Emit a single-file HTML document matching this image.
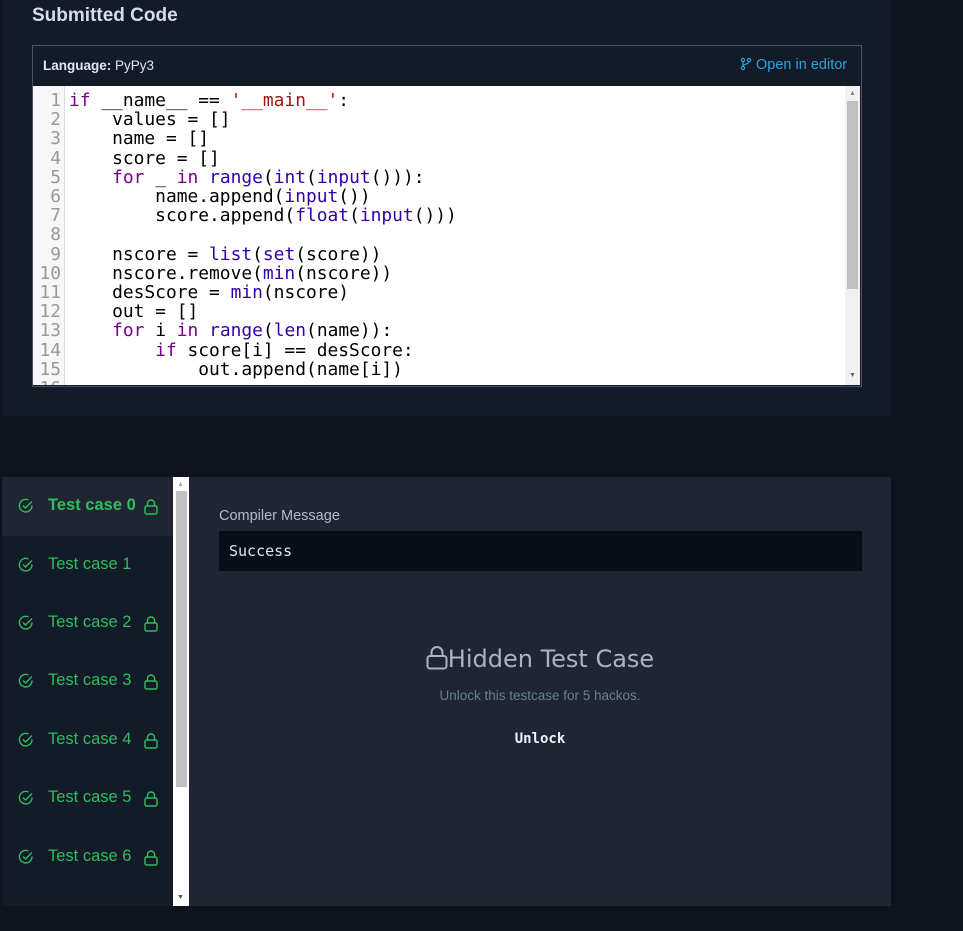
<!DOCTYPE html><html><head><style>
body{margin:0;width:963px;height:931px;background:#0e131d;font-family:"Liberation Sans","DejaVu Sans",sans-serif;position:relative;overflow:hidden}
.a{position:absolute}
.code{font-family:"DejaVu Sans Mono",monospace;font-size:17.9px;line-height:19.2px;white-space:pre;color:#000}
.k{color:#708}.b{color:#30a}.s{color:#a11}
.tc{position:absolute;left:2px;width:171px;height:58px;color:#2ebd5f;font-family:"Liberation Sans",sans-serif;font-size:16.5px}
.tc span{position:absolute;left:46px;top:19px}
.tc svg{position:absolute}
</style></head><body>
<div class="a" style="left:2px;top:0;width:889px;height:416px;background:#131a28"></div>
<div class="a" style="left:32px;top:5px;color:#d6dde8;font-weight:bold;font-size:19px">Submitted Code</div>
<div class="a" style="left:32px;top:45px;width:828px;height:340px;border:1px solid #4a5262;background:#131a28"></div>
<div class="a" style="left:43px;top:58px;color:#e2e6ee;font-size:13.5px"><b>Language:</b> PyPy3</div>
<div class="a" style="left:740px;top:57px;color:#2fa3d9;font-size:14.5px"><svg width="12" height="14" viewBox="0 0 12 14" style="vertical-align:-2px"><circle cx="3" cy="3" r="1.6" fill="none" stroke="#2fa3d9" stroke-width="1.2"/><circle cx="3" cy="11" r="1.6" fill="none" stroke="#2fa3d9" stroke-width="1.2"/><circle cx="9" cy="3" r="1.6" fill="none" stroke="#2fa3d9" stroke-width="1.2"/><path d="M3 4.6v4.8M9 4.6c0 3-6 2-6 4.8" fill="none" stroke="#2fa3d9" stroke-width="1.2"/></svg> Open in editor</div>
<div class="a" style="left:33px;top:86px;width:827px;height:299px;background:#fff;overflow:hidden">
<div class="a" style="left:0;top:0;width:31px;height:299px;background:#f7f7f7;border-right:1px solid #ddd"></div>
<div class="a code" style="left:0;top:5px;width:28px;text-align:right;color:#999">1
2
3
4
5
6
7
8
9
10
11
12
13
14
15
16</div>
<div class="a code" style="left:36px;top:5px"><span class="k">if</span> __name__ == <span class="s">'__main__'</span>:
    values = []
    name = []
    score = []
    <span class="k">for</span> _ <span class="k">in</span> <span class="b">range</span>(<span class="b">int</span>(<span class="b">input</span>())):
        name.append(<span class="b">input</span>())
        score.append(<span class="b">float</span>(<span class="b">input</span>()))

    nscore = <span class="b">list</span>(<span class="b">set</span>(score))
    nscore.remove(<span class="b">min</span>(nscore))
    desScore = <span class="b">min</span>(nscore)
    out = []
    <span class="k">for</span> i <span class="k">in</span> <span class="b">range</span>(<span class="b">len</span>(name)):
        <span class="k">if</span> score[i] == desScore:
            out.append(name[i])
</div>
<div class="a" style="left:812px;top:0;width:15px;height:299px;background:#f1f1f1"></div>
<div class="a" style="left:814px;top:15px;width:11px;height:188px;background:#c1c1c1"></div>
<div class="a" style="left:816px;top:4px;font-size:7px;color:#888">▲</div>
<div class="a" style="left:816px;top:286px;font-size:7px;color:#666">▼</div>
</div>

<div class="a" style="left:2px;top:477px;width:889px;height:429px;background:#1f2533"></div>
<div class="a" style="left:2px;top:536px;width:171px;height:370px;background:#131a28"></div>
<div class="a" style="left:173px;top:477px;width:16px;height:429px;background:#fff"></div>
<div class="a" style="left:176px;top:491px;width:11px;height:296px;background:#c1c1c1"></div>
<div class="a" style="left:177px;top:481px;font-size:7px;color:#aaa">▲</div>
<div class="a" style="left:177px;top:894px;font-size:7px;color:#555">▼</div>

<div class="tc" style="top:477px"><svg style="left:16px;top:21px" width="16" height="16" viewBox="0 0 16 16"><path d="M14 7.5A6.3 6.3 0 1 1 10.5 2" fill="none" stroke="#2ebd5f" stroke-width="1.4"/><path d="M5 7.5l2.5 2.5L14 3.5" fill="none" stroke="#2ebd5f" stroke-width="1.4"/></svg><span style="font-weight:bold">Test case 0</span><svg style="left:142px;top:22px" width="14" height="16" viewBox="0 0 14 16"><rect x="1" y="7" width="12" height="8" rx="1.5" fill="none" stroke="#2ebd5f" stroke-width="1.4"/><path d="M3.5 7V4.5a3.5 3.5 0 0 1 7 0V7" fill="none" stroke="#2ebd5f" stroke-width="1.4"/></svg></div>
<div class="tc" style="top:536px"><svg style="left:16px;top:21px" width="16" height="16" viewBox="0 0 16 16"><path d="M14 7.5A6.3 6.3 0 1 1 10.5 2" fill="none" stroke="#2ebd5f" stroke-width="1.4"/><path d="M5 7.5l2.5 2.5L14 3.5" fill="none" stroke="#2ebd5f" stroke-width="1.4"/></svg><span>Test case 1</span></div>
<div class="tc" style="top:594px"><svg style="left:16px;top:21px" width="16" height="16" viewBox="0 0 16 16"><path d="M14 7.5A6.3 6.3 0 1 1 10.5 2" fill="none" stroke="#2ebd5f" stroke-width="1.4"/><path d="M5 7.5l2.5 2.5L14 3.5" fill="none" stroke="#2ebd5f" stroke-width="1.4"/></svg><span>Test case 2</span><svg style="left:142px;top:22px" width="14" height="16" viewBox="0 0 14 16"><rect x="1" y="7" width="12" height="8" rx="1.5" fill="none" stroke="#2ebd5f" stroke-width="1.4"/><path d="M3.5 7V4.5a3.5 3.5 0 0 1 7 0V7" fill="none" stroke="#2ebd5f" stroke-width="1.4"/></svg></div>
<div class="tc" style="top:652px"><svg style="left:16px;top:21px" width="16" height="16" viewBox="0 0 16 16"><path d="M14 7.5A6.3 6.3 0 1 1 10.5 2" fill="none" stroke="#2ebd5f" stroke-width="1.4"/><path d="M5 7.5l2.5 2.5L14 3.5" fill="none" stroke="#2ebd5f" stroke-width="1.4"/></svg><span>Test case 3</span><svg style="left:142px;top:22px" width="14" height="16" viewBox="0 0 14 16"><rect x="1" y="7" width="12" height="8" rx="1.5" fill="none" stroke="#2ebd5f" stroke-width="1.4"/><path d="M3.5 7V4.5a3.5 3.5 0 0 1 7 0V7" fill="none" stroke="#2ebd5f" stroke-width="1.4"/></svg></div>
<div class="tc" style="top:711px"><svg style="left:16px;top:21px" width="16" height="16" viewBox="0 0 16 16"><path d="M14 7.5A6.3 6.3 0 1 1 10.5 2" fill="none" stroke="#2ebd5f" stroke-width="1.4"/><path d="M5 7.5l2.5 2.5L14 3.5" fill="none" stroke="#2ebd5f" stroke-width="1.4"/></svg><span>Test case 4</span><svg style="left:142px;top:22px" width="14" height="16" viewBox="0 0 14 16"><rect x="1" y="7" width="12" height="8" rx="1.5" fill="none" stroke="#2ebd5f" stroke-width="1.4"/><path d="M3.5 7V4.5a3.5 3.5 0 0 1 7 0V7" fill="none" stroke="#2ebd5f" stroke-width="1.4"/></svg></div>
<div class="tc" style="top:769px"><svg style="left:16px;top:21px" width="16" height="16" viewBox="0 0 16 16"><path d="M14 7.5A6.3 6.3 0 1 1 10.5 2" fill="none" stroke="#2ebd5f" stroke-width="1.4"/><path d="M5 7.5l2.5 2.5L14 3.5" fill="none" stroke="#2ebd5f" stroke-width="1.4"/></svg><span>Test case 5</span><svg style="left:142px;top:22px" width="14" height="16" viewBox="0 0 14 16"><rect x="1" y="7" width="12" height="8" rx="1.5" fill="none" stroke="#2ebd5f" stroke-width="1.4"/><path d="M3.5 7V4.5a3.5 3.5 0 0 1 7 0V7" fill="none" stroke="#2ebd5f" stroke-width="1.4"/></svg></div>
<div class="tc" style="top:828px"><svg style="left:16px;top:21px" width="16" height="16" viewBox="0 0 16 16"><path d="M14 7.5A6.3 6.3 0 1 1 10.5 2" fill="none" stroke="#2ebd5f" stroke-width="1.4"/><path d="M5 7.5l2.5 2.5L14 3.5" fill="none" stroke="#2ebd5f" stroke-width="1.4"/></svg><span>Test case 6</span><svg style="left:142px;top:22px" width="14" height="16" viewBox="0 0 14 16"><rect x="1" y="7" width="12" height="8" rx="1.5" fill="none" stroke="#2ebd5f" stroke-width="1.4"/><path d="M3.5 7V4.5a3.5 3.5 0 0 1 7 0V7" fill="none" stroke="#2ebd5f" stroke-width="1.4"/></svg></div>

<div class="a" style="left:219px;top:508px;color:#b4bccb;font-size:14.5px">Compiler Message</div>
<div class="a" style="left:219px;top:531px;width:643px;height:40px;background:#080d18"></div>
<div class="a" style="left:229px;top:542px;color:#dfe6f0;font-size:15px;font-family:'DejaVu Sans Mono',monospace">Success</div>
<div class="a" style="left:189px;top:645px;width:702px;text-align:center;color:#aab3c2;font-size:24px;font-family:'DejaVu Sans',sans-serif"><svg width="22" height="24" viewBox="0 0 22 24" style="vertical-align:-3px"><rect x="1.5" y="10" width="19" height="12.5" rx="2.5" fill="none" stroke="#aab3c2" stroke-width="2"/><path d="M5.5 10V6.5a5.5 5.5 0 0 1 11 0V10" fill="none" stroke="#aab3c2" stroke-width="2"/></svg>Hidden Test Case</div>
<div class="a" style="left:189px;top:688px;width:702px;text-align:center;color:#6a7f92;font-size:13.5px">Unlock this testcase for 5 hackos.</div>
<div class="a" style="left:189px;top:731px;width:702px;text-align:center;color:#eef2f8;font-size:14px;font-weight:bold;font-family:'DejaVu Sans Mono',monospace">Unlock</div>
</body></html>
